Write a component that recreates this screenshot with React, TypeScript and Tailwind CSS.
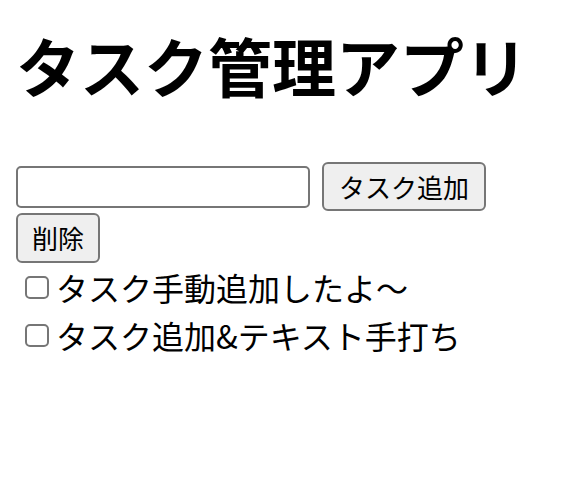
import React from "react";

export default function App() {
  const tasks = ["タスク手動追加したよ〜", "タスク追加&テキスト手打ち"];
  return (
    <div className="px-4 bg-white text-black font-['Noto_Sans_CJK_JP','Noto_Sans',sans-serif]">
      <h1 className="pt-[32px] text-[64px] font-bold leading-none tracking-normal">タスク管理アプリ</h1>
      <div className="mt-[66px] flex items-center gap-[12px]">
        <input
          type="text"
          className="w-[294px] h-[42px] border-2 border-[#767676] rounded-[5px] bg-white px-2 text-[26px] outline-none"
        />
        <button className="w-[164px] h-[49px] border-2 border-[#767676] rounded-[6px] bg-[#efefef] text-[26px] leading-none flex items-center justify-center">
          タスク追加
        </button>
      </div>
      <button className="mt-[2px] w-[84px] h-[50px] border-2 border-[#767676] rounded-[6px] bg-[#efefef] text-[26px] leading-none flex items-center justify-center">
        削除
      </button>
      <div className="flex flex-col">
        {tasks.map((t) => (
          <div key={t} className="h-[48px] flex items-center">
            <input
              type="checkbox"
              className="appearance-none ml-[9px] mr-[7px] w-[24px] h-[23px] border-2 border-[#767676] rounded-[5px] bg-white"
            />
            <span className="text-[32px] leading-none">{t}</span>
          </div>
        ))}
      </div>
    </div>
  );
}
